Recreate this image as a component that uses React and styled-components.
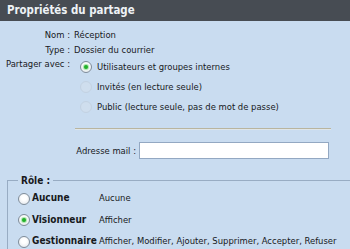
import styled, { createGlobalStyle } from "styled-components";

const GlobalStyle = createGlobalStyle`
  html, body {
    margin: 0;
    padding: 0;
    background: #c9dcf0;
  }
  body {
    font-family: "DejaVu Sans Condensed", "DejaVu Sans", sans-serif;
    font-stretch: condensed;
    font-size: 9.4px;
    color: #17191c;
  }
`;

const SHARE_OPTIONS = [
  { label: "Utilisateurs et groupes internes", checked: true },
  { label: "Invités (en lecture seule)", disabled: true },
  { label: "Public (lecture seule, pas de mot de passe)", disabled: true },
];

const ROLES = [
  { name: "Aucune", rights: "Aucune" },
  { name: "Visionneur", rights: "Afficher", checked: true },
  {
    name: "Gestionnaire",
    rights: "Afficher, Modifier, Ajouter, Supprimer, Accepter, Refuser",
  },
];

const App = () => {
  return (
    <Panel>
      <GlobalStyle />
      <TitleBar>Propriétés du partage</TitleBar>
      <Body>
        <InfoGrid>
          <Label>Nom :</Label>
          <Value>Réception</Value>
          <Label>Type :</Label>
          <Value>Dossier du courrier</Value>
          <Label $shift={-1}>Partager avec :</Label>
          <OptionList>
            {SHARE_OPTIONS.map((opt) => (
              <OptionRow key={opt.label}>
                <Radio $checked={opt.checked} $disabled={opt.disabled} />
                <span>{opt.label}</span>
              </OptionRow>
            ))}
          </OptionList>
        </InfoGrid>
        <Separator />
        <MailRow>
          <MailLabel>Adresse mail :</MailLabel>
          <MailInput type="text" />
        </MailRow>
        <RoleSet>
          <RoleLegend>Rôle :</RoleLegend>
          {ROLES.map((role) => (
            <RoleRow key={role.name}>
              <Radio $checked={role.checked} />
              <RoleName>{role.name}</RoleName>
              <span>{role.rights}</span>
            </RoleRow>
          ))}
        </RoleSet>
      </Body>
    </Panel>
  );
};

const Panel = styled.div`
  width: 350px;
  height: 249px;
  overflow: hidden;
  background: #c9dcf0;
`;
const TitleBar = styled.div`
  height: 21px;
  line-height: 21px;
  padding-left: 7px;
  background: #474c53;
  box-sizing: border-box;
  color: #eef2f6;
  font-weight: bold;
  font-size: 11.4px;
`;
const Body = styled.div`
  padding-top: 6px;
`;
const InfoGrid = styled.div`
  display: grid;
  grid-template-columns: 70px 1fr;
  column-gap: 4px;
  align-items: start;
`;
const Label = styled.div`
  text-align: right;
  line-height: 15px;
  white-space: nowrap;
  margin-top: ${(p) => p.$shift || 0}px;
`;
const Value = styled.div`
  line-height: 15px;
`;
const OptionList = styled.div`
  display: flex;
  flex-direction: column;
  margin-left: 6px;
  margin-top: -1px;
`;
const OptionRow = styled.div`
  display: flex;
  align-items: center;
  gap: 5px;
  height: 20px;
`;
const Radio = styled.span`
  position: relative;
  flex: none;
  width: 12px;
  height: 12px;
  margin-top: 2px;
  box-sizing: border-box;
  border-radius: 50%;
  border: 1px solid ${(p) => (p.$disabled ? "#c3d2e2" : "#7f8c99")};
  background: ${(p) =>
    p.$disabled
      ? "#cfdeee"
      : "radial-gradient(circle at 50% 40%, #ffffff 30%, #dde2e8 100%)"};

  &::after {
    content: "";
    display: ${(p) => (p.$checked ? "block" : "none")};
    position: absolute;
    left: 3px;
    top: 3px;
    width: 4px;
    height: 4px;
    border-radius: 50%;
    background: #22b02a;
    box-shadow: 0 0 1px 1px #a4e2a4;
  }
`;
const Separator = styled.div`
  margin: 12px 0 0 75px;
  width: 256px;
  height: 1px;
  background: #b9b59f;
  border-bottom: 1px solid #dfe6ea;
`;
const MailRow = styled.div`
  display: flex;
  align-items: center;
  gap: 3px;
  margin-top: 12px;
`;
const MailLabel = styled.label`
  width: 136px;
  text-align: right;
`;
const MailInput = styled.input`
  width: 190px;
  height: 17px;
  box-sizing: border-box;
  margin: 0;
  border: 1px solid #93a8c2;
  background: #ffffff;
  outline: none;
`;
const RoleSet = styled.fieldset`
  margin: 15px -20px 0 7px;
  padding: 0 0 10px 10px;
  border: 1px solid #98acc3;
  border-right: none;
  min-inline-size: 0;
`;
const RoleLegend = styled.legend`
  padding: 0 3px;
  font-weight: bold;
  font-size: 10px;
  line-height: 13px;
`;
const RoleRow = styled.div`
  display: grid;
  grid-template-columns: 12px 65px 1fr;
  column-gap: 2px;
  align-items: center;
  height: 21.5px;
  white-space: nowrap;
`;
const RoleName = styled.span`
  font-weight: bold;
  font-size: 10px;
`;

export default App;
